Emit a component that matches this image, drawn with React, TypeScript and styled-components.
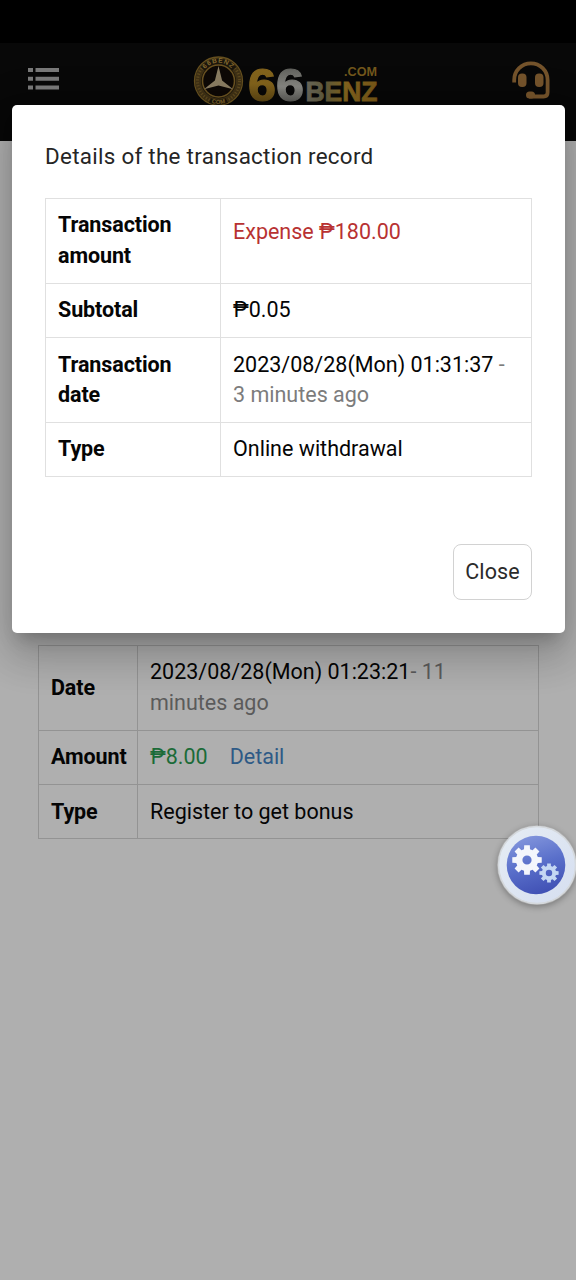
import React from "react";
import styled, { createGlobalStyle } from "styled-components";

const Global = createGlobalStyle`
  * { box-sizing: border-box; }
  body {
    margin: 0;
    background: #afafaf;
    font-family: Roboto, "Noto Sans", sans-serif;
    font-size: 21.5px;
    line-height: 30.6px;
    color: #050505;
  }
`;

const Screen = styled.div`
  position: relative;
  width: 576px;
  height: 1280px;
  overflow: hidden;
  background: #afafaf;
`;

const StatusBar = styled.div`
  height: 43px;
  background: #000;
`;

const Header = styled.header`
  height: 98px;
  padding: 0 24px 0 27px;
  display: flex;
  align-items: flex-start;
  justify-content: space-between;
  background: #080808;
`;

const MenuIcon = styled.svg`
  display: block;
  margin-top: 23px;
`;

const Logo = styled.svg`
  display: block;
  margin: 10px 0 0 1px;
`;

const HeadsetIcon = styled.svg`
  display: block;
  margin-top: 16px;
`;

const Content = styled.main`
  padding: 504px 37px 0 38px;
`;

const Table = styled.table<{ $border: string }>`
  width: 100%;
  table-layout: fixed;
  border-collapse: collapse;
  th, td { border: 1px solid ${(p) => p.$border}; }
`;

const Row = styled.tr<{ $height: number }>`
  height: ${(p) => p.$height}px;
`;

const Label = styled.th<{ $width: number }>`
  width: ${(p) => p.$width}px;
  padding: 0 0 0 12px;
  text-align: left;
  font-weight: 700;
  letter-spacing: -0.1px;
`;

const Value = styled.td<{ $raise?: number }>`
  padding: 0 0 ${(p) => p.$raise ?? 0}px 12px;
`;

const Shift = styled.div`
  padding-top: 1px;
`;

const Tint = styled.span<{ $color: string }>`
  color: ${(p) => p.$color};
`;

const DetailLink = styled.a`
  margin-left: 22px;
  color: #2e5a86;
`;

const Dialog = styled.section`
  position: absolute;
  left: 12px;
  top: 105px;
  width: 553px;
  height: 528px;
  padding: 36px 33px 33px;
  display: flex;
  flex-direction: column;
  border-radius: 5px;
  background: #fff;
  box-shadow: 0 11px 15px -7px rgba(0, 0, 0, 0.2), 0 24px 38px 3px rgba(0, 0, 0, 0.14),
    0 9px 46px 8px rgba(0, 0, 0, 0.12);
`;

const Title = styled.h2`
  margin: 0 0 26px;
  font-size: 22.4px;
  letter-spacing: 0.29px;
  font-weight: 400;
  color: #252525;
`;

const CloseButton = styled.button`
  width: 79px;
  height: 56px;
  margin: auto 0 0 auto;
  padding: 0;
  border: 1px solid #d2d2d2;
  border-radius: 8px;
  background: #fff;
  font: inherit;
  letter-spacing: 0.1px;
  color: #2b2b2b;
`;

const SettingsButton = styled.button`
  position: absolute;
  left: 497px;
  top: 825px;
  width: 80px;
  height: 80px;
  padding: 0;
  border: 0;
  border-radius: 50%;
  background: none;
  box-shadow: 0 2px 6px rgba(0, 0, 0, 0.3);
`;

function gearPath(cx: number, cy: number, outer: number, inner: number) {
  const points: string[] = [];
  for (let i = 0; i < 8; i++) {
    const mid = (i * Math.PI) / 4 - Math.PI / 2;
    [[-0.27, inner], [-0.19, outer], [0.19, outer], [0.27, inner]].forEach(([a, r]) => {
      points.push(`${(cx + Math.cos(mid + a) * r).toFixed(2)} ${(cy + Math.sin(mid + a) * r).toFixed(2)}`);
    });
  }
  return `M${points.join("L")}Z`;
}

function SettingsArt() {
  return (
    <svg width="80" height="80" viewBox="0 0 80 80">
      <defs>
        <linearGradient id="ball" x1="0.3" y1="0" x2="0.6" y2="1">
          <stop offset="0" stopColor="#8295dc" />
          <stop offset="0.5" stopColor="#596fca" />
          <stop offset="1" stopColor="#4050b4" />
        </linearGradient>
        <linearGradient id="rim" x1="0" y1="0" x2="1" y2="1">
          <stop offset="0" stopColor="#e6edf4" />
          <stop offset="1" stopColor="#d5def0" />
        </linearGradient>
      </defs>
      <circle cx="40" cy="40" r="38.5" fill="url(#rim)" stroke="#d5d9dd" strokeWidth="1.5" />
      <circle cx="39" cy="40" r="29.3" fill="url(#ball)" />
      <g fillRule="evenodd">
        <path d={`${gearPath(30, 35, 15, 11.2)}M34.600 35a4.600 4.600 0 1 0-9.200 0a4.600 4.600 0 1 0 9.200 0Z`} fill="#f4f6fc" />
        <path d={`${gearPath(52, 48, 9.8, 7.2)}M55.200 48a3.200 3.200 0 1 0-6.400 0a3.200 3.200 0 1 0 6.400 0Z`} fill="#c4d7f3" />
      </g>
    </svg>
  );
}

function BrandLogo() {
  return (
    <Logo width="188" height="54" viewBox="192 53 188 54" fontFamily="Liberation Sans, sans-serif" fontWeight="700">
      <defs>
        <linearGradient id="gold" x1="0" y1="0" x2="0" y2="1">
          <stop offset="0" stopColor="#84641d" />
          <stop offset="0.5" stopColor="#80611b" />
          <stop offset="1" stopColor="#463610" />
        </linearGradient>
        <linearGradient id="steel" x1="0" y1="0" x2="0" y2="1">
          <stop offset="0" stopColor="#4c4d49" />
          <stop offset="0.55" stopColor="#858580" />
          <stop offset="1" stopColor="#3d3d39" />
        </linearGradient>
        <linearGradient id="letters" x1="0" y1="0" x2="1" y2="0">
          <stop offset="0" stopColor="#68675a" />
          <stop offset="0.3" stopColor="#605938" />
          <stop offset="0.55" stopColor="#80621e" />
          <stop offset="1" stopColor="#765617" />
        </linearGradient>
        <path id="upperArc" d="M200.300 81a18.200 18.200 0 0 1 36.400 0" />
        <path id="lowerArc" d="M198 92a23.500 23.500 0 0 0 41 0" />
      </defs>
      <circle cx="218.5" cy="81" r="20.5" fill="#1b160c" stroke="#3e3015" strokeWidth="6" />
      <circle cx="218.5" cy="81" r="24" fill="none" stroke="#66501f" strokeWidth="1.3" />
      <circle cx="218.5" cy="81" r="21" fill="none" stroke="#6f5725" strokeWidth="3" strokeDasharray="1.2 1.8" opacity="0.65" />
      <path d="M203 69a20 20 0 0 1 31 0" fill="none" stroke="#1b160c" strokeWidth="6" />
      <path d="M210 100.500a21 21 0 0 0 17 0" fill="none" stroke="#1b160c" strokeWidth="5" />
      <circle cx="218.5" cy="81" r="16" fill="#0e0906" stroke="#6a5221" strokeWidth="1.5" />
      <path d="M218.500 66l3.600 14.500l11 8.700l-14.600-3.700l-14.600 3.700l11-8.700Z" fill="#8a7c61" />
      <text fontSize="6.5" letterSpacing="1" fill="#876b30">
        <textPath href="#upperArc" startOffset="50%" textAnchor="middle">66BENZ</textPath>
      </text>
      <text fontSize="6" fill="#80642b">
        <textPath href="#lowerArc" startOffset="50%" textAnchor="middle">COM</textPath>
      </text>
      <g strokeWidth="1.2">
        <text x="248" y="100.5" fontSize="47" textLength="28" lengthAdjust="spacingAndGlyphs" fill="url(#gold)" stroke="url(#gold)">6</text>
        <text x="276" y="100.5" fontSize="47" textLength="28" lengthAdjust="spacingAndGlyphs" fill="url(#steel)" stroke="url(#steel)">6</text>
      </g>
      <text x="305.5" y="101" fontSize="28" textLength="72" lengthAdjust="spacingAndGlyphs" fill="url(#letters)" stroke="url(#letters)" strokeWidth="0.8">BENZ</text>
      <text x="344" y="76" fontSize="13" textLength="33" lengthAdjust="spacingAndGlyphs" fill="#72571c">.COM</text>
    </Logo>
  );
}

export default function App() {
  return (
    <Screen>
      <Global />
      <StatusBar />
      <Header>
        <MenuIcon width="34" height="26" viewBox="27 66 34 26" fill="#797979">
          <path d="M28 68h5v4h-5zM35.500 68h23.500v4h-23.500zM28 76.700h5v4h-5zM35.500 76.700h23.500v4h-23.500zM28 85.400h5v4h-5zM35.500 85.400h23.500v4h-23.500z" />
        </MenuIcon>
        <BrandLogo />
        <HeadsetIcon width="42" height="42" viewBox="510 59 42 42" fill="#74532b">
          <path d="M514.200 82.500v-2.500a16.700 16.700 0 0 1 33.400 0v12.500q0 4-4 4h-14.600" fill="none" stroke="#74532b" strokeWidth="3.800" />
          <rect x="518" y="73.500" width="8.500" height="13.500" rx="4" />
          <rect x="535" y="73.500" width="8.500" height="13.500" rx="4" />
          <rect x="526" y="91.500" width="9" height="7" rx="3.500" />
        </HeadsetIcon>
      </Header>
      <Content>
        <Table $border="#939393">
          <tbody>
            <Row $height={85}>
              <Label $width={99}>Date</Label>
              <Value>2023/08/28(Mon) 01:23:21<Tint $color="#5b5b5b">- 11<br />minutes ago</Tint></Value>
            </Row>
            <Row $height={54}>
              <Label $width={99}>Amount</Label>
              <Value><Tint $color="#1b6b38">₱8.00</Tint><DetailLink>Detail</DetailLink></Value>
            </Row>
            <Row $height={54}>
              <Label $width={99}><Shift>Type</Shift></Label>
              <Value><Shift>Register to get bonus</Shift></Value>
            </Row>
          </tbody>
        </Table>
      </Content>
      <Dialog>
        <Title>Details of the transaction record</Title>
        <Table $border="#e0e0e0">
          <tbody>
            <Row $height={85}>
              <Label $width={175}>Transaction<br />amount</Label>
              <Value $raise={17}><Tint $color="#b83232">Expense ₱180.00</Tint></Value>
            </Row>
            <Row $height={54}>
              <Label $width={175}>Subtotal</Label>
              <Value>₱0.05</Value>
            </Row>
            <Row $height={85}>
              <Label $width={175}><Shift>Transaction<br />date</Shift></Label>
              <Value><Shift>2023/08/28(Mon) 01:31:37 <Tint $color="#7c7c7c">-<br />3 minutes ago</Tint></Shift></Value>
            </Row>
            <Row $height={54}>
              <Label $width={175}><Shift>Type</Shift></Label>
              <Value><Shift>Online withdrawal</Shift></Value>
            </Row>
          </tbody>
        </Table>
        <CloseButton>Close</CloseButton>
      </Dialog>
      <SettingsButton aria-label="Settings"><SettingsArt /></SettingsButton>
    </Screen>
  );
}
